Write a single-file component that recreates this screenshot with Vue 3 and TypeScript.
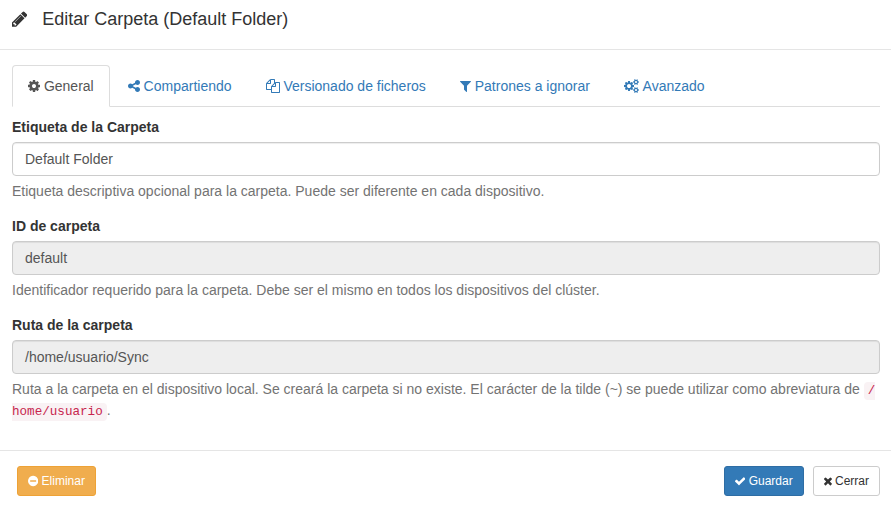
<script setup lang="ts">
interface Ico { d: string; x: number; w: number }
const icons: Record<string, Ico> = {
  pencil: { x: 0, w: 1515, d: 'M363 1536l91-91-235-235-91 91v107h128v128h107zm523-928q0-22-22-22-10 0-17 7l-542 542q-7 7-7 17 0 22 22 22 10 0 17-7l542-542q7-7 7-17zm-54-192l416 416-832 832h-416v-416zm683 96q0 53-37 90l-166 166-416-416 166-165q36-38 90-38 53 0 91 38l235 234q37 39 37 91z' },
  cog: { x: 128, w: 1536, d: 'M1152 896q0-106-75-181t-181-75-181 75-75 181 75 181 181 75 181-75 75-181zm512-109v222q0 12-8 23t-20 13l-185 28q-19 54-39 91 35 50 107 138 10 12 10 25t-9 23q-27 37-99 108t-94 71q-12 0-26-9l-138-108q-44 23-91 38-16 136-29 186-7 28-36 28h-222q-14 0-24.500-8.500t-11.500-21.500l-28-184q-49-16-90-37l-141 107q-10 9-25 9-14 0-25-11-126-114-165-168-7-10-7-23 0-12 8-23 15-21 51-66.500t54-70.500q-27-50-41-99l-183-27q-13-2-21-12.500t-8-23.500v-222q0-12 8-23t19-13l186-28q14-46 39-92-40-57-107-138-10-12-10-24 0-10 9-23 26-36 98.500-107.500t94.500-71.500q13 0 26 10l138 107q44-23 91-38 16-136 29-186 7-28 36-28h222q14 0 24.500 8.500t11.500 21.500l28 184q49 16 90 37l142-107q9-9 24-9 13 0 25 10 129 119 165 170 7 8 7 22 0 12-8 23-15 21-51 66.500t-54 70.500q26 50 41 98l183 28q13 2 21 12.500t8 23.500z' },
  share: { x: 128, w: 1536, d: 'M1344 1024q133 0 226.500 93.500t93.500 226.500-93.500 226.500-226.500 93.500-226.500-93.500-93.500-226.500q0-12 2-34l-360-180q-92 86-218 86-133 0-226.500-93.500t-93.500-226.500 93.500-226.500 226.500-93.500q126 0 218 86l360-180q-2-22-2-34 0-133 93.500-226.500t226.500-93.500 226.500 93.500 93.500 226.500-93.500 226.500-226.500 93.500q-126 0-218-86l-360 180q2 22 2 34t-2 34l360 180q92-86 218-86z' },
  files: { x: 0, w: 1792, d: 'M1696 384q40 0 68 28t28 68v1216q0 40-28 68t-68 28h-960q-40 0-68-28t-28-68v-288h-544q-40 0-68-28t-28-68v-672q0-40 20-88t48-76l408-408q28-28 76-48t88-20h416q40 0 68 28t28 68v328q68-40 128-40h416zm-544 213l-299 299h299v-299zm-640-384l-299 299h299v-299zm196 647l316-316v-416h-384v416q0 40-28 68t-68 28h-416v640h512v-256q0-40 20-88t48-76zm956 804v-1152h-384v416q0 40-28 68t-68 28h-416v640h896z' },
  filter: { x: 192, w: 1408, d: 'M1595 295q17 41-14 70l-493 493v742q0 42-39 59-13 5-25 5-27 0-45-19l-256-256q-19-19-19-45v-486l-493-493q-31-29-14-70 17-39 59-39h1280q42 0 59 39z' },
  cogs: { x: 0, w: 1984, d: 'M896 896q0-106-75-181t-181-75-181 75-75 181 75 181 181 75 181-75 75-181zm768 512q0-52-38-90t-90-38-90 38-38 90q0 53 37.500 90.500t90.500 37.500 90.500-37.500 37.500-90.500zm0-1024q0-52-38-90t-90-38-90 38-38 90q0 53 37.500 90.500t90.500 37.500 90.500-37.500 37.500-90.500zm-384 421v185q0 10-7 19.500t-16 10.500l-155 24q-11 35-32 76 34 48 90 115 7 11 7 20 0 12-7 19-23 30-82.500 89.500t-78.500 59.500q-11 0-21-7l-115-90q-37 19-77 31-11 108-23 155-7 24-30 24h-186q-11 0-20-7.500t-10-17.500l-23-153q-34-10-75-31l-118 89q-7 7-20 7-11 0-21-8-144-133-144-160 0-9 7-19 10-14 41-53t47-61q-23-44-35-82l-152-24q-10-1-17-9.500t-7-19.500v-185q0-10 7-19.500t16-10.500l155-24q11-35 32-76-34-48-90-115-7-11-7-20 0-12 7-20 22-30 82-89t79-59q11 0 21 7l115 90q34-18 77-32 11-108 23-154 7-24 30-24h186q11 0 20 7.500t10 17.500l23 153q34 10 75 31l118-89q8-7 20-7 11 0 21 8 144 133 144 160 0 8-7 19-12 16-42 54t-45 60q23 48 34 82l152 23q10 2 17 10.500t7 19.500zm640 533v140q0 16-149 31-12 27-30 52 51 113 51 138 0 4-4 7-122 71-124 71-8 0-46-47t-52-68q-20 2-30 2t-30-2q-14 21-52 68t-46 47q-2 0-124-71-4-3-4-7 0-25 51-138-18-25-30-52-149-15-149-31v-140q0-16 149-31 13-29 30-52-51-113-51-138 0-4 4-7 4-2 35-20t59-34 30-16q8 0 46 46.500t52 67.500q20-2 30-2t30 2q51-71 92-112l6-2q4 0 124 70 4 3 4 7 0 25-51 138 17 23 30 52 149 15 149 31zm0-1024v140q0 16-149 31-12 27-30 52 51 113 51 138 0 4-4 7-122 71-124 71-8 0-46-47t-52-68q-20 2-30 2t-30-2q-14 21-52 68t-46 47q-2 0-124-71-4-3-4-7 0-25 51-138-18-25-30-52-149-15-149-31v-140q0-16 149-31 13-29 30-52-51-113-51-138 0-4 4-7 4-2 35-20t59-34 30-16q8 0 46 46.500t52 67.500q20-2 30-2t30 2q51-71 92-112l6-2q4 0 124 70 4 3 4 7 0 25-51 138 17 23 30 52 149 15 149 31z' },
  minus: { x: 128, w: 1536, d: 'M1344 960v-128q0-26-19-45t-45-19h-768q-26 0-45 19t-19 45v128q0 26 19 45t45 19h768q26 0 45-19t19-45zm320-64q0 209-103 385.500t-279.500 279.500-385.500 103-385.500-103-279.500-279.500-103-385.500 103-385.500 279.500-279.500 385.500-103 385.500 103 279.500 279.500 103 385.500z' },
  check: { x: 121, w: 1550, d: 'M1671 566q0 40-28 68l-724 724-136 136q-28 28-68 28t-68-28l-136-136-362-362q-28-28-28-68t28-68l136-136q28-28 68-28t68 28l294 295 656-657q28-28 68-28t68 28l136 136q28 28 28 68z' },
  times: { x: 302, w: 1188, d: 'M1490 1322q0 40-28 68l-136 136q-28 28-68 28t-68-28l-294-294-294 294q-28 28-68 28t-68-28l-136-136q-28-28-28-68t28-68l294-294-294-294q-28-28-28-68t28-68l136-136q28-28 68-28t68 28l294 294 294-294q28-28 68-28t68 28l136 136q28 28 28 68t-28 68l-294 294 294 294q28 28 28 68z' },
}
const box = (k: string) => `${icons[k].x} 0 ${icons[k].w} 1792`
const wid = (k: string, size: number) => `${(icons[k].w / 1792) * size}px`

const tabs = [
  { icon: 'cog', label: 'General', active: true },
  { icon: 'share', label: 'Compartiendo', active: false },
  { icon: 'files', label: 'Versionado de ficheros', active: false },
  { icon: 'filter', label: 'Patrones a ignorar', active: false },
  { icon: 'cogs', label: 'Avanzado', active: false },
]
</script>

<template>
  <div class="modal">
    <header class="head">
      <svg class="pencil" :viewBox="box('pencil')" fill="currentColor" :style="{ width: wid('pencil', 18) }"><path :d="icons.pencil.d" /></svg>
      <h4 class="title">Editar Carpeta (Default Folder)</h4>
    </header>

    <main class="body">
      <ul class="tabs">
        <li v-for="t in tabs" :key="t.label" class="tab" :class="{ active: t.active }">
          <svg class="ico" :viewBox="box(t.icon)" fill="currentColor" :style="{ width: wid(t.icon, 14) }"><path :d="icons[t.icon].d" /></svg>
          {{ t.label }}
        </li>
      </ul>

      <div class="group first">
        <label class="lbl">Etiqueta de la Carpeta</label>
        <div class="input">Default Folder</div>
        <p class="help">Etiqueta descriptiva opcional para la carpeta. Puede ser diferente en cada dispositivo.</p>
      </div>
      <div class="group">
        <label class="lbl">ID de carpeta</label>
        <div class="input off">default</div>
        <p class="help">Identificador requerido para la carpeta. Debe ser el mismo en todos los dispositivos del clúster.</p>
      </div>
      <div class="group">
        <label class="lbl">Ruta de la carpeta</label>
        <div class="input off">/home/usuario/Sync</div>
        <p class="help">Ruta a la carpeta en el dispositivo local. Se creará la carpeta si no existe. El carácter de la tilde (~) se puede utilizar como abreviatura de <code class="code">/<wbr />home/usuario</code>.</p>
      </div>
    </main>

    <footer class="foot">
      <button class="btn warn">
        <svg class="ico" :viewBox="box('minus')" fill="currentColor" :style="{ width: wid('minus', 12) }"><path :d="icons.minus.d" /></svg>
        Eliminar
      </button>
      <div class="right">
        <button class="btn primary">
          <svg class="ico" :viewBox="box('check')" fill="currentColor" :style="{ width: wid('check', 12) }"><path :d="icons.check.d" /></svg>
          Guardar
        </button>
        <button class="btn plain">
          <svg class="ico" :viewBox="box('times')" fill="currentColor" :style="{ width: wid('times', 12) }"><path :d="icons.times.d" /></svg>
          Cerrar
        </button>
      </div>
    </footer>
  </div>
</template>

<style scoped>
.modal {
  width: 891px;
  height: 507px;
  background: #fff;
  color: #333;
  font-family: "Liberation Sans", Arial, sans-serif;
  font-size: 14px;
  line-height: 20px;
  overflow: hidden;
}
.head {
  height: 50px;
  box-sizing: border-box;
  border-bottom: 1px solid #e5e5e5;
  display: flex;
  align-items: flex-start;
  padding: 6px 12px 0;
}
.pencil {
  height: 18px;
  margin-top: 4px;
  flex: none;
}
.title {
  margin: 0 0 0 15px;
  font-size: 18px;
  font-weight: 500;
  line-height: 26px;
}
.body {
  padding: 15px 11px 0 12px;
}
.tabs {
  list-style: none;
  margin: 0;
  padding: 0;
  display: flex;
  gap: 2px;
  border-bottom: 1px solid #ddd;
  height: 42px;
  box-sizing: border-box;
}
.tab {
  height: 42px;
  box-sizing: border-box;
  padding: 10px 15px;
  border: 1px solid transparent;
  border-radius: 4px 4px 0 0;
  color: #337ab7;
  white-space: nowrap;
}
.tab.active {
  color: #555;
  background: #fff;
  border-color: #ddd #ddd transparent;
}
.ico {
  height: 1em;
  vertical-align: -2px;
}
.group {
  margin-top: 15px;
}
.group.first {
  margin-top: 10px;
}
.lbl {
  display: block;
  font-weight: 700;
  margin-bottom: 5px;
}
.input {
  height: 34px;
  box-sizing: border-box;
  padding: 6px 12px;
  border: 1px solid #ccc;
  border-radius: 4px;
  color: #555;
  background: #fff;
  box-shadow: inset 0 1px 1px rgba(0, 0, 0, 0.075);
}
.input.off {
  background: #eee;
}
.help {
  margin: 5px 0 10px;
  color: #737373;
}
.code {
  font-family: "Liberation Mono", monospace;
  font-size: 12.6px;
  line-height: 18px;
  color: #c7254e;
  background: #f9f2f4;
  padding: 2px 4px;
  border-radius: 4px;
}
.foot {
  position: absolute;
  top: 450px;
  left: 0;
  width: 891px;
  box-sizing: border-box;
  border-top: 1px solid #e5e5e5;
  padding: 15px 11px 0 17px;
  display: flex;
  justify-content: space-between;
}
.right {
  display: flex;
  gap: 9px;
}
.btn {
  height: 30px;
  box-sizing: border-box;
  padding: 5px 10px;
  font: inherit;
  font-size: 12px;
  line-height: 18px;
  border: 1px solid transparent;
  border-radius: 3px;
  white-space: nowrap;
}
.warn {
  color: #fff;
  background: #f0ad4e;
  border-color: #eea236;
}
.primary {
  color: #fff;
  background: #337ab7;
  border-color: #2e6da4;
}
.plain {
  color: #333;
  background: #fff;
  border-color: #ccc;
}
</style>
